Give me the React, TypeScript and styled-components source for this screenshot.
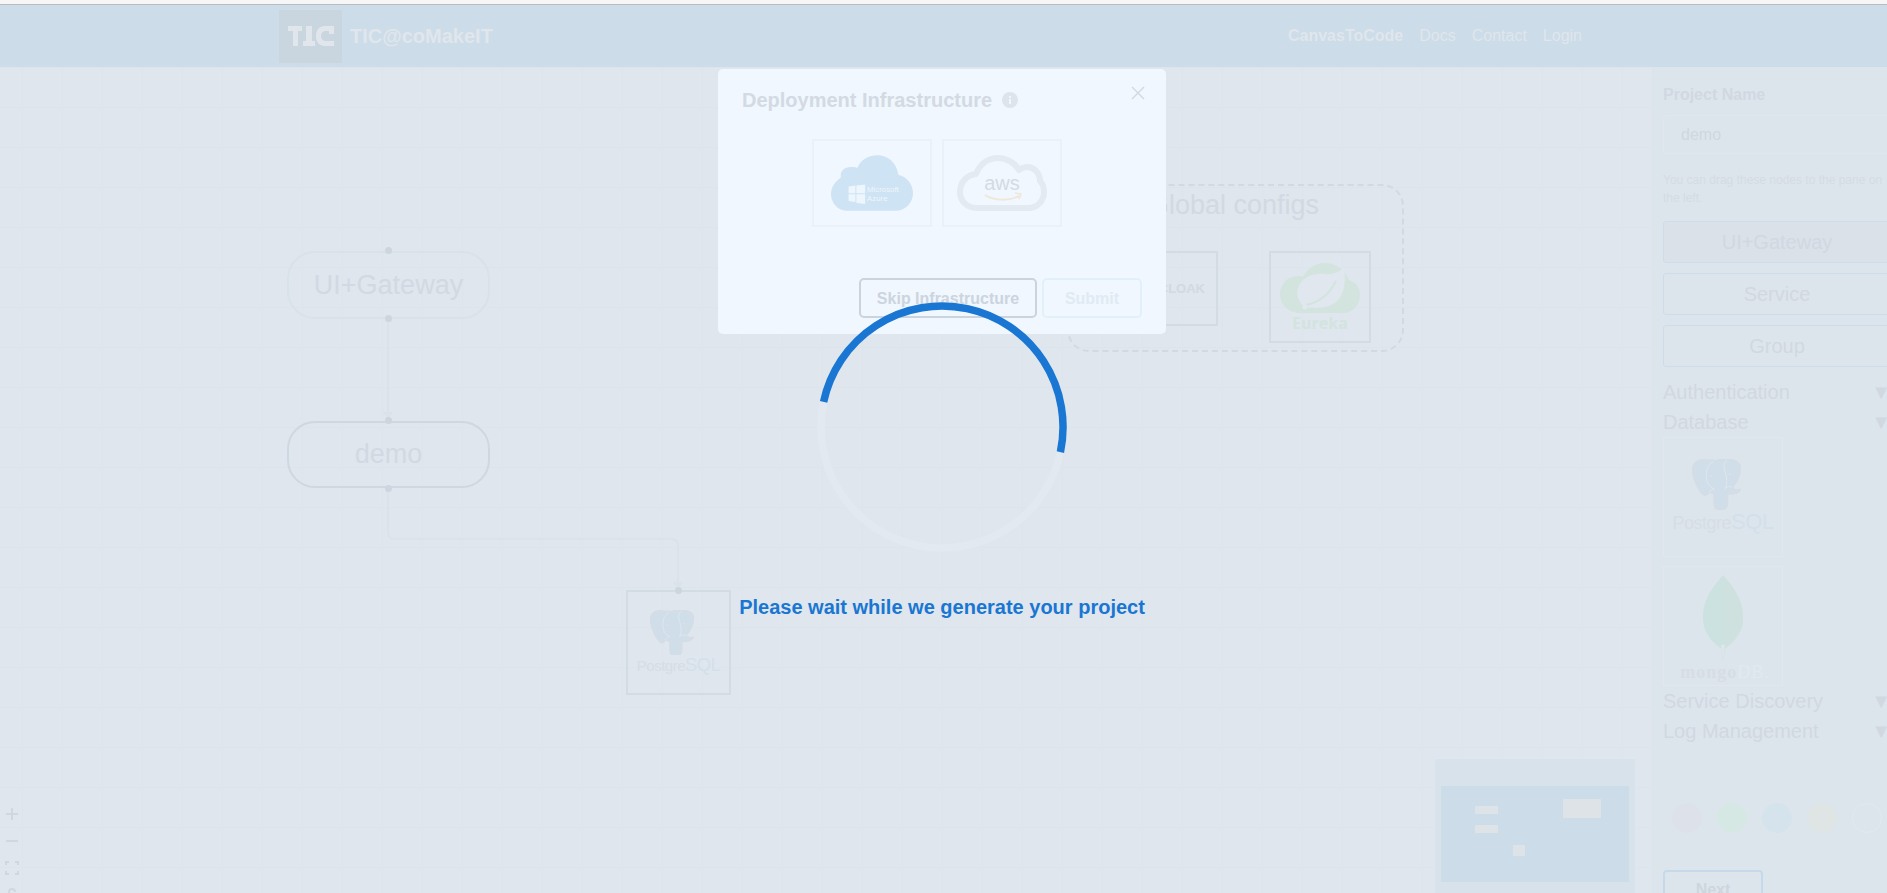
import * as React from "react";
import styled, { createGlobalStyle } from 'styled-components';

const FONT = '"Liberation Sans", Arial, sans-serif';

const GlobalStyle = createGlobalStyle`
  html, body {
    margin: 0;
    height: 100%;
    overflow: hidden;
    background: #dfe6ed;
    font-family: ${FONT};
  }
  * { box-sizing: border-box; }
`;

const Page = styled.div`
  position: relative;
  width: 1887px;
  height: 893px;
  overflow: hidden;
  display: flex;
  flex-direction: column;
`;

const TopStrip = styled.div`
  height: 5px;
  flex: none;
  background: #f6f6f6;
  border-bottom: 1px solid #b9bdc0;
`;

const Header = styled.header`
  height: 62px;
  flex: none;
  background: #ccdce9;
  display: flex;
  align-items: center;
  padding-left: 279px;
  padding-right: 305px;
  color: #e0e6ec;
`;

const LogoBox = styled.div`
  width: 63px;
  height: 53px;
  background: #c9d5df;
  display: flex;
  align-items: center;
  justify-content: center;
`;

const Brand = styled.div`
  margin-left: 8px;
  font-size: 20px;
  font-weight: 700;
  flex: 1;
`;

const Nav = styled.nav`
  display: flex;
  gap: 16px;
  font-size: 16px;
`;

const NavLink = styled.span<{ $active?: boolean }>`
  font-weight: ${p => (p.$active ? 700 : 400)};
`;

const Main = styled.div`
  flex: 1;
  display: flex;
  min-height: 0;
`;

const Canvas = styled.div`
  position: relative;
  width: 1652px;
  flex: none;
  background-color: #dfe6ed;
  background-image: linear-gradient(90deg, #dde5ec 1px, transparent 1px),
    linear-gradient(180deg, #dde5ec 1px, transparent 1px);
  background-size: 40px 40px;
  background-position: 22px 0;
`;

const Edges = styled.svg`
  position: absolute;
  left: 0;
  top: 0;
`;

const FlowNode = styled.div<{ $x: number; $y: number; $w: number; $h: number; $strong?: boolean }>`
  position: absolute;
  left: ${p => p.$x}px;
  top: ${p => p.$y}px;
  width: ${p => p.$w}px;
  height: ${p => p.$h}px;
  border: 2px solid ${p => (p.$strong ? '#cfd7e0' : '#dae2e9')};
  border-radius: 28px;
  display: flex;
  align-items: center;
  justify-content: center;
  font-size: 27px;
  color: #d2d9e2;
`;

const Handle = styled.span<{ $x: number; $y: number }>`
  position: absolute;
  left: ${p => p.$x}px;
  top: ${p => p.$y}px;
  width: 7px;
  height: 7px;
  border-radius: 50%;
  background: #cdd5de;
`;

const Group = styled.div`
  position: absolute;
  left: 1067px;
  top: 117px;
  width: 337px;
  height: 168px;
  border: 2px dashed #d2d9e2;
  border-radius: 22px;
`;

const GroupTitle = styled.div`
  position: absolute;
  left: 0;
  right: 4px;
  top: 4px;
  font-size: 27px;
  color: #d2d9e2;
  text-align: center;
`;

const TileNode = styled.div<{ $x: number; $y: number; $w: number; $h: number }>`
  position: absolute;
  left: ${p => p.$x}px;
  top: ${p => p.$y}px;
  width: ${p => p.$w}px;
  height: ${p => p.$h}px;
  border: 2px solid #d3dbe3;
  display: flex;
  align-items: center;
  justify-content: center;
`;

const CloakLabel = styled.span`
  position: absolute;
  right: 11px;
  top: 28px;
  font-size: 13px;
  font-weight: 700;
  color: #d2d9e2;
`;

const Controls = styled.div`
  position: absolute;
  left: 0;
  bottom: -15px;
  width: 24px;
  display: flex;
  flex-direction: column;
  align-items: center;
`;

const ControlButton = styled.div`
  width: 24px;
  height: 27px;
  display: flex;
  align-items: center;
  justify-content: center;
  color: #cfd7e0;
`;

const MiniMap = styled.div`
  position: absolute;
  left: 1435px;
  top: 692px;
  width: 200px;
  height: 140px;
  padding: 27px 6px 0;
  background: #d8e2ea;
`;

const MiniViewport = styled.div`
  position: relative;
  height: 96px;
  background: #ccdce9;
`;

const MiniNode = styled.span<{ $x: number; $y: number; $w: number; $h: number }>`
  position: absolute;
  left: ${p => p.$x}px;
  top: ${p => p.$y}px;
  width: ${p => p.$w}px;
  height: ${p => p.$h}px;
  background: #dee3e8;
  border-radius: 1px;
`;

const Sidebar = styled.aside`
  width: 235px;
  flex: none;
  border-left: 1px solid #dce4eb;
  padding: 18px 0 0 10px;
  overflow: hidden;
  background: #dde5ec;
`;

const SideColumn = styled.div`
  width: 228px;
  display: flex;
  flex-direction: column;
`;

const FieldLabel = styled.div`
  font-size: 16px;
  font-weight: 700;
  line-height: 20px;
  color: #d1d8e1;
`;

const NameInput = styled.div`
  margin-top: 10px;
  height: 39px;
  padding-left: 17px;
  display: flex;
  align-items: center;
  font-size: 16px;
  color: #cfd7e0;
  border: 1px solid #e0e7ee;
  border-radius: 4px;
`;

const Hint = styled.p`
  margin: 17px 0 14px;
  font-size: 12px;
  line-height: 18px;
  color: #d4dbe4;
  width: 224px;
`;

const PaletteButton = styled.div<{ $selected?: boolean }>`
  height: 42px;
  margin-bottom: 10px;
  display: flex;
  align-items: center;
  justify-content: center;
  font-size: 20px;
  color: #d1d8e1;
  background: ${p => (p.$selected ? '#dae1e9' : 'transparent')};
  border: 1px solid #cddcea;
  border-radius: 3px;
`;

const SectionRow = styled.div`
  height: 30px;
  display: flex;
  align-items: center;
  justify-content: space-between;
  font-size: 20px;
  color: #d1d8e1;
`;

const Caret = styled.span`
  font-size: 20px;
`;

const LogoTiles = styled.div`
  display: flex;
  flex-direction: column;
  gap: 9px;
`;

const LogoTile = styled.div`
  width: 120px;
  height: 120px;
  border: 1px solid #e0e7ee;
  display: flex;
  align-items: center;
  justify-content: center;
`;

const Swatches = styled.div`
  margin-top: 57px;
  padding-left: 9px;
  display: flex;
  gap: 15px;
`;

const Swatch = styled.span<{ $color: string; $outline?: boolean }>`
  width: 30px;
  height: 30px;
  flex: none;
  border-radius: 50%;
  background: ${p => p.$color};
  border: ${p => (p.$outline ? '1px solid #e2e9ef' : 'none')};
`;

const NextButton = styled.div`
  margin-top: 37px;
  width: 100px;
  height: 40px;
  border: 2px solid #c6d9ea;
  border-radius: 4px;
  display: flex;
  align-items: center;
  justify-content: center;
  font-size: 16px;
  font-weight: 700;
  color: #cdd5de;
`;

const Modal = styled.div`
  position: absolute;
  left: 718px;
  top: 69px;
  width: 448px;
  height: 265px;
  padding: 17px 24px 16px;
  background: #f0f7fe;
  border-radius: 5px;
  display: flex;
  flex-direction: column;
`;

const ModalHead = styled.div`
  display: flex;
  align-items: center;
  height: 28px;
  gap: 10px;
  font-size: 20px;
  font-weight: 700;
  color: #d3dae3;
`;

const CloseIcon = styled.svg`
  position: absolute;
  right: 21px;
  top: 17px;
`;

const ProviderRow = styled.div`
  margin-top: 25px;
  display: flex;
  justify-content: center;
  gap: 10px;
  padding-right: 10px;
`;

const ProviderCard = styled.div`
  width: 120px;
  height: 88px;
  border: 2px solid #e9f2fa;
  display: flex;
  align-items: center;
  justify-content: center;
`;

const ModalFooter = styled.div`
  margin-top: auto;
  display: flex;
  justify-content: flex-end;
  gap: 5px;
`;

const ModalButton = styled.div<{ $muted?: boolean }>`
  height: 40px;
  width: ${p => (p.$muted ? '100px' : '178px')};
  padding-top: 1px;
  border: 2px solid ${p => (p.$muted ? '#e0f1fa' : '#cbd3dd')};
  border-radius: 5px;
  display: flex;
  align-items: center;
  justify-content: center;
  font-size: 16px;
  font-weight: 700;
  color: ${p => (p.$muted ? '#e0eaf3' : '#ccd4de')};
`;

const Loader = styled.div`
  position: absolute;
  left: 738px;
  top: 302px;
  width: 408px;
  display: flex;
  flex-direction: column;
  align-items: center;
`;

const LoaderText = styled.div`
  margin-top: 43px;
  font-size: 20px;
  font-weight: 700;
  line-height: 24px;
  white-space: nowrap;
  color: #1976d2;
`;

const ElephantSvg = styled.svg`
  margin-right: 12px;
  flex: none;
`;

const Elephant = (props: { width: number }) => (
  <ElephantSvg width={props.width} viewBox="0 0 148 154">
    <path d="M50 4C25-2 2 8 2 32c0 28 18 63 33 76 7 4 13-2 17-8 8 5 14 4 15 4v31c0 13 10 18 20 18 11 0 20-6 20-18v-30c13 2 33 0 39-13-11 4-21 0-24-6 13-16 25-41 24-61-1-17-21-25-46-25-15 0-22 3-28 6-7-3-14-4-22-2z" fill="#d0deea" stroke="#d5dce4" strokeWidth="5" />
    <path d="M64 8C48 16 40 38 44 60c2 14 9 24 23 30M106 3C92 14 96 30 102 46c5 14 3 30-2 46M52 100c4-5 8-8 15-10M122 86c-8-4-14-4-22 2" fill="none" stroke="#dfe6ed" strokeWidth="3" />
    <circle cx="58" cy="52" r="2.500" fill="#dfe6ed" />
    <circle cx="114" cy="46" r="2.500" fill="#dfe6ed" />
  </ElephantSvg>
);

const LogoStack = styled.div`
  display: flex;
  flex-direction: column;
  align-items: center;
`;

const PostgresWord = styled.div<{ $size: number }>`
  font-size: ${p => p.$size}px;
  line-height: 1.1;
  letter-spacing: -0.5px;
  color: #d6dde5;
  white-space: nowrap;
  font-weight: 400;
`;

const PostgresSql = styled.span`
  font-size: 1.22em;
  color: #d2e0ea;
`;

const PostgresLogo = (props: { width: number; size: number }) => (
  <LogoStack>
    <Elephant width={props.width} />
    <PostgresWord $size={props.size}>Postgre<PostgresSql>SQL</PostgresSql></PostgresWord>
  </LogoStack>
);

const MongoWord = styled.div`
  margin-left: 4px;
  font-family: "Liberation Serif", serif;
  font-size: 18px;
  font-weight: 700;
  letter-spacing: 1px;
  line-height: 16px;
  color: #d6dde5;
`;

const MongoLight = styled.span`
  color: #e2e9ef;
  font-weight: 400;
`;

const MongoLogo = () => (
  <LogoStack>
    <svg width="42" height="92" viewBox="0 0 44 92">
      <path d="M22 1c8 10 21 23 21 45 0 16-11 26-19 32l-2 13-2-13C12 72 1 62 1 46 1 24 14 11 22 1z" fill="#cce2e0" />
      <path d="M22 1v90l2-13c8-6 19-16 19-32C43 24 30 11 22 1z" fill="#cfe1df" />
      <path d="M20 74l2 16 2-16z" fill="#dfe6ea" />
    </svg>
    <MongoWord>mongo<MongoLight>DB.</MongoLight></MongoWord>
  </LogoStack>
);

const EurekaWord = styled.div`
  font-family: "Open Sans", sans-serif;
  font-size: 16px;
  font-weight: 700;
  line-height: 17px;
  color: #d3e3df;
`;

const EurekaLogo = () => (
  <LogoStack>
    <svg width="80" height="52" viewBox="0 0 80 52">
      <path d="M20 50C8 50 0 41 0 31c0-10 8-18 18-18 2 0 3 0 5 1C28 5 36 0 44 0c12 0 20 6 25 17 7 2 11 8 11 15 0 10-7 18-17 18z" fill="#d3e4df" />
      <path d="M25 44c-6-4-9-11-7-19 3-10 14-15 26-14 9 1 16-2 20-7 2 14 1 27-8 35-8 6-19 7-31 5z" fill="#e0e7ee" />
      <path d="M26 42c10-2 22-8 30-24" fill="none" stroke="#d3e4df" strokeWidth="2" />
      <circle cx="25" cy="44" r="2.500" fill="#e0e7ee" />
    </svg>
    <EurekaWord>Eureka</EurekaWord>
  </LogoStack>
);

const AzureText = styled.text`
  fill: #eef6fd;
  font-family: ${FONT};
`;

const AzureLogo = () => (
  <svg width="82" height="57" viewBox="0 0 84 58">
    <path d="M17 57C7 57 0 49 0 40c0-8 5-14 10-17C9 14 16 12 21 12c2 0 4 0 6 1C30 5 38 0 47 0c11 0 20 7 22 20 9 2 15 10 15 19 0 10-8 18-18 18z" fill="#cee3f3" />
    <path d="M18 32l7-1v8h-7zM26 31l9-1v9h-9zM18 40h7v8l-7-1zM26 40h9v10l-9-1z" fill="#eef6fd" />
    <AzureText x="37" y="38" fontSize="8">Microsoft</AzureText>
    <AzureText x="37" y="47" fontSize="8">Azure</AzureText>
  </svg>
);

const AwsText = styled.text`
  fill: #d3dbe4;
  font-family: ${FONT};
`;

const AwsLogo = () => (
  <svg width="90" height="56" viewBox="0 0 90 56">
    <path d="M20 53C10 53 3 46 3 37 3 27 10 20 19 19 23 9 31 3 41 3c9 0 17 5 21 12 3-2 6-3 8-3 7 0 13 6 13 14 3 3 4 7 4 11 0 9-7 16-16 16z" fill="none" stroke="#e3eaf1" strokeWidth="6" strokeLinejoin="round" />
    <AwsText x="45" y="35" textAnchor="middle" fontSize="20">aws</AwsText>
    <path d="M28 40c10 6 24 6 34 1" fill="none" stroke="#efe7d8" strokeWidth="2" />
    <path d="M58 38l6 1-2 5" fill="none" stroke="#efe7d8" strokeWidth="1.500" />
  </svg>
);

const TicMark = () => (
  <svg width="46" height="22" viewBox="0 0 46 22">
    <path d="M0 1h14v5H10v15H5V6H0zM18 1h6v15h3v5H15v-5h3zM46 1H37c-6 0-9 4-9 10s3 10 9 10h9v-5h-8c-3 0-5-2-5-5s2-5 5-5h3v3h5z" fill="#e0e6ec" />
  </svg>
);

const databaseSections = ['Authentication', 'Database'];
const otherSections = ['Service Discovery', 'Log Management'];
const swatchColors = ['#dde1ea', '#d5e8e4', '#d5e3ed', '#dfe4e4'];

const App = () => {
  return (
    <Page>
      <GlobalStyle />
      <TopStrip />
      <Header>
        <LogoBox><TicMark /></LogoBox>
        <Brand>TIC@coMakeIT</Brand>
        <Nav>
          <NavLink $active>CanvasToCode</NavLink>
          <NavLink>Docs</NavLink>
          <NavLink>Contact</NavLink>
          <NavLink>Login</NavLink>
        </Nav>
      </Header>
      <Main>
        <Canvas>
          <Edges width="1652" height="826" fill="none" stroke="#dbe3ea" strokeWidth="2">
            <path d="M388 252V353" />
            <path d="M388 422V465q0 7 7 7H671q7 0 7 7V523" />
            <path d="M383 345l5 8 5-8z" fill="#dbe3ea" stroke="none" />
            <path d="M673 515l5 8 5-8z" fill="#dbe3ea" stroke="none" />
          </Edges>
          <FlowNode $x={287} $y={184} $w={203} $h={68}>UI+Gateway</FlowNode>
          <FlowNode $x={287} $y={354} $w={203} $h={67} $strong>demo</FlowNode>
          <Handle $x={385} $y={180} />
          <Handle $x={385} $y={248} />
          <Handle $x={385} $y={350} />
          <Handle $x={385} $y={418} />
          <TileNode $x={626} $y={523} $w={105} $h={105}>
            <PostgresLogo width={44} size={15} />
          </TileNode>
          <Handle $x={675} $y={520} />
          <Group>
            <GroupTitle>Global configs</GroupTitle>
          </Group>
          <TileNode $x={1120} $y={184} $w={98} $h={75}>
            <CloakLabel>KEYCLOAK</CloakLabel>
          </TileNode>
          <TileNode $x={1269} $y={184} $w={102} $h={92}>
            <EurekaLogo />
          </TileNode>
          <Controls>
            <ControlButton>
              <svg width="14" height="14" viewBox="0 0 14 14"><path d="M7 1v12M1 7h12" stroke="currentColor" strokeWidth="2" /></svg>
            </ControlButton>
            <ControlButton>
              <svg width="14" height="14" viewBox="0 0 14 14"><path d="M1 7h12" stroke="currentColor" strokeWidth="2" /></svg>
            </ControlButton>
            <ControlButton>
              <svg width="14" height="14" viewBox="0 0 14 14" fill="none"><path d="M1 4V1h3M10 1h3v3M13 10v3h-3M4 13H1v-3" stroke="currentColor" strokeWidth="2" /></svg>
            </ControlButton>
            <ControlButton>
              <svg width="14" height="14" viewBox="0 0 14 14" fill="none"><path d="M4 6V4a3 3 0 0 1 6 0" stroke="currentColor" strokeWidth="2" /></svg>
            </ControlButton>
          </Controls>
          <MiniMap>
            <MiniViewport>
              <MiniNode $x={34} $y={20} $w={23} $h={8} />
              <MiniNode $x={34} $y={39} $w={23} $h={8} />
              <MiniNode $x={72} $y={59} $w={12} $h={11} />
              <MiniNode $x={122} $y={13} $w={38} $h={19} />
            </MiniViewport>
          </MiniMap>
        </Canvas>
        <Sidebar>
          <SideColumn>
            <FieldLabel>Project Name</FieldLabel>
            <NameInput>demo</NameInput>
            <Hint>You can drag these nodes to the pane on the left.</Hint>
            <PaletteButton $selected>UI+Gateway</PaletteButton>
            <PaletteButton>Service</PaletteButton>
            <PaletteButton>Group</PaletteButton>
            {databaseSections.map(name => (
              <SectionRow key={name}>{name}<Caret>▼</Caret></SectionRow>
            ))}
            <LogoTiles>
              <LogoTile><PostgresLogo width={49} size={18} /></LogoTile>
              <LogoTile><MongoLogo /></LogoTile>
            </LogoTiles>
            {otherSections.map(name => (
              <SectionRow key={name}>{name}<Caret>▼</Caret></SectionRow>
            ))}
            <Swatches>
              {swatchColors.map(color => <Swatch key={color} $color={color} />)}
              <Swatch $color="transparent" $outline />
            </Swatches>
            <NextButton>Next</NextButton>
          </SideColumn>
        </Sidebar>
      </Main>
      <Modal>
        <ModalHead>
          Deployment Infrastructure
          <svg width="16" height="16" viewBox="0 0 16 16">
            <circle cx="8" cy="8" r="8" fill="#dde4ec" />
            <path d="M7 7h2v5H7zM7 4h2v2H7z" fill="#f0f7fe" />
          </svg>
        </ModalHead>
        <CloseIcon width="14" height="14" viewBox="0 0 14 14">
          <path d="M1 1l12 12M13 1L1 13" stroke="#d1d8e1" strokeWidth="1.400" />
        </CloseIcon>
        <ProviderRow>
          <ProviderCard><AzureLogo /></ProviderCard>
          <ProviderCard><AwsLogo /></ProviderCard>
        </ProviderRow>
        <ModalFooter>
          <ModalButton>Skip Infrastructure</ModalButton>
          <ModalButton $muted>Submit</ModalButton>
        </ModalFooter>
      </Modal>
      <Loader>
        <svg width="250" height="250" viewBox="0 0 250 250" fill="none">
          <circle cx="125" cy="125" r="121" stroke="#e3e9f1" strokeWidth="7.500" />
          <path d="M6.600 99.900A121 121 0 0 1 243.400 150.100" stroke="#1976d2" strokeWidth="7.500" />
        </svg>
        <LoaderText>Please wait while we generate your project</LoaderText>
      </Loader>
    </Page>
  );
};

export default App;
